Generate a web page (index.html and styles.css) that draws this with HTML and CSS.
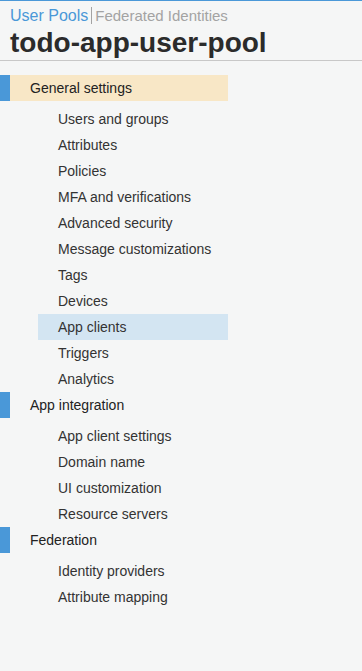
FILE: index.html
```html
<!DOCTYPE html>
<html lang="en">
<head>
    <meta charset="UTF-8">
    <meta name="viewport" content="width=device-width, initial-scale=1.0">
    <title>todo-app-user-pool</title>
    <link rel="stylesheet" href="styles.css">
</head>
<body>

    <!-- Header -->
    <div class="header">
        <div class="tabs">
            <a href="#" class="tab active">User Pools</a><a href="#" class="tab">Federated Identities</a>
        </div>
        <h1>todo-app-user-pool</h1>
    </div>

    <!-- Side navigation -->
    <div class="nav">
        <div class="group">
            <div class="group-title current">General settings</div>
            <ul>
                <li>Users and groups</li>
                <li>Attributes</li>
                <li>Policies</li>
                <li>MFA and verifications</li>
                <li>Advanced security</li>
                <li>Message customizations</li>
                <li>Tags</li>
                <li>Devices</li>
                <li class="selected">App clients</li>
                <li>Triggers</li>
                <li>Analytics</li>
            </ul>
        </div>
        <div class="group">
            <div class="group-title">App integration</div>
            <ul>
                <li>App client settings</li>
                <li>Domain name</li>
                <li>UI customization</li>
                <li>Resource servers</li>
            </ul>
        </div>
        <div class="group">
            <div class="group-title">Federation</div>
            <ul>
                <li>Identity providers</li>
                <li>Attribute mapping</li>
            </ul>
        </div>
    </div>

</body>
</html>
```

FILE: styles.css
```css
body {
    margin: 0;
    background: #f5f6f6;
    font-family: 'Liberation Sans', Arial, sans-serif;
    color: #333;
    border-top: 1px solid #4a98d8;
    min-height: 670px;
}

.header {
    padding: 6px 10px 0 10px;
    border-bottom: 1px solid #c8c8c8;
    height: 53px;
}

.tabs {
    font-size: 16px;
    line-height: 17px;
}

.tab {
    text-decoration: none;
    color: #a3a3a3;
    font-size: 15px;
}

.tab.active {
    color: #4a98d8;
    font-size: 16px;
    padding-right: 3px;
    margin-right: 3px;
    border-right: 1px solid #a3a3a3;
}

h1 {
    margin: 4px 0 0 0;
    font-size: 28px;
    line-height: 30px;
    font-weight: bold;
    color: #2b2b2b;
}

.nav {
    padding-top: 14px;
    width: 228px;
}

.group-title {
    height: 26px;
    line-height: 26px;
    padding-left: 20px;
    font-size: 14px;
    color: #222;
    border-left: 10px solid #4a98d8;
    width: 198px;
}

.group-title.current {
    background: #f8e7c6;
}

ul {
    list-style: none;
    margin: 5px 0 0 0;
    padding: 0;
}

li {
    height: 26px;
    line-height: 26px;
    padding-left: 58px;
    font-size: 14px;
    color: #333;
}

li.selected {
    background: #d3e5f2;
    margin-left: 38px;
    padding-left: 20px;
}
```
